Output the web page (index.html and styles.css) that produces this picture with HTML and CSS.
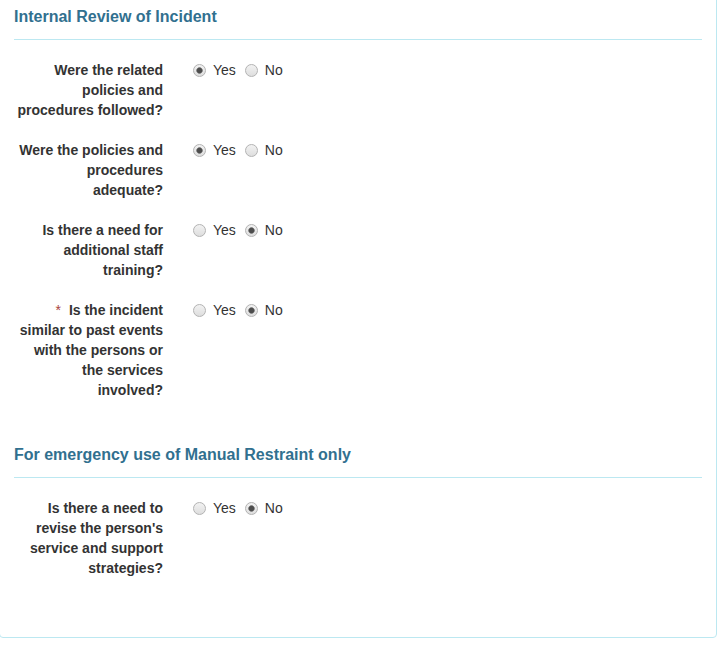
FILE: index.html
```html
<!DOCTYPE html>
<html lang="en">
<head>
<meta charset="utf-8">
<title>Internal Review of Incident</title>
<link rel="stylesheet" href="styles.css">
</head>
<body>
<div class="panel">
  <section class="section">
    <h3 class="section-title">Internal Review of Incident</h3>
    <hr class="divider">
    <div class="form-group">
      <div class="control-label">Were the related policies and procedures followed?</div>
      <div class="controls">
        <label class="radio-opt"><input type="radio" name="q1" checked>Yes</label>
        <label class="radio-opt"><input type="radio" name="q1">No</label>
      </div>
    </div>
    <div class="form-group">
      <div class="control-label">Were the policies and procedures adequate?</div>
      <div class="controls">
        <label class="radio-opt"><input type="radio" name="q2" checked>Yes</label>
        <label class="radio-opt"><input type="radio" name="q2">No</label>
      </div>
    </div>
    <div class="form-group">
      <div class="control-label">Is there a need for additional staff training?</div>
      <div class="controls">
        <label class="radio-opt"><input type="radio" name="q3">Yes</label>
        <label class="radio-opt"><input type="radio" name="q3" checked>No</label>
      </div>
    </div>
    <div class="form-group">
      <div class="control-label"><span class="required">*</span>Is the incident similar to past events with the persons or the services involved?</div>
      <div class="controls">
        <label class="radio-opt"><input type="radio" name="q4">Yes</label>
        <label class="radio-opt"><input type="radio" name="q4" checked>No</label>
      </div>
    </div>
  </section>
  <section class="section section-next">
    <h3 class="section-title">For emergency use of Manual Restraint only</h3>
    <hr class="divider">
    <div class="form-group">
      <div class="control-label">Is there a need to revise the person's service and support strategies?</div>
      <div class="controls">
        <label class="radio-opt"><input type="radio" name="q5">Yes</label>
        <label class="radio-opt"><input type="radio" name="q5" checked>No</label>
      </div>
    </div>
  </section>
</div>
</body>
</html>
```
FILE: styles.css
```css
html, body {
  margin: 0;
  padding: 0;
  background: #ffffff;
}

body {
  font-family: "Liberation Sans", Arial, sans-serif;
  font-size: 14px;
  line-height: 20px;
  color: #333333;
}

.panel {
  box-sizing: border-box;
  width: 718px;
  margin: -1px 0 0 -1px;
  padding: 8px 14px 39px 14px;
  border: 1px solid #bce8f1;
  border-radius: 0 0 4px 4px;
  background: #ffffff;
}

.section {
  display: flow-root;
}

.section-title {
  margin: 0 0 13px 0;
  font-size: 16px;
  line-height: 18px;
  font-weight: bold;
  color: #31708f;
}

.section-next {
  margin-top: 26px;
}

.divider {
  margin: 0 0 20px 0;
  border: 0;
  border-top: 1px solid #bce8f1;
  height: 0;
}

.form-group {
  display: flex;
  align-items: flex-start;
  margin-bottom: 20px;
}

.control-label {
  box-sizing: border-box;
  width: 164px;
  padding-right: 15px;
  text-align: right;
  font-weight: bold;
}

.required {
  display: inline-block;
  color: #a94442;
  font-weight: normal;
  margin-right: 8px;
}

.controls {
  display: flex;
  align-items: center;
  height: 20px;
  padding-left: 15px;
}

.radio-opt {
  display: inline-flex;
  align-items: center;
  height: 20px;
  margin-right: 9px;
  font-weight: normal;
  color: #333333;
}

.radio-opt input {
  -webkit-appearance: none;
  appearance: none;
  box-sizing: border-box;
  width: 13px;
  height: 13px;
  margin: 0 7px 0 0;
  border: 1px solid #b3b3b3;
  border-radius: 50%;
  background: linear-gradient(#f2f2f2, #dedede);
}

.radio-opt input:checked {
  background:
    radial-gradient(circle, #4d4d4d 0, #4d4d4d 2.2px, #8a8a8a 3px, rgba(0,0,0,0) 3.6px),
    linear-gradient(#f2f2f2, #dedede);
}
```
